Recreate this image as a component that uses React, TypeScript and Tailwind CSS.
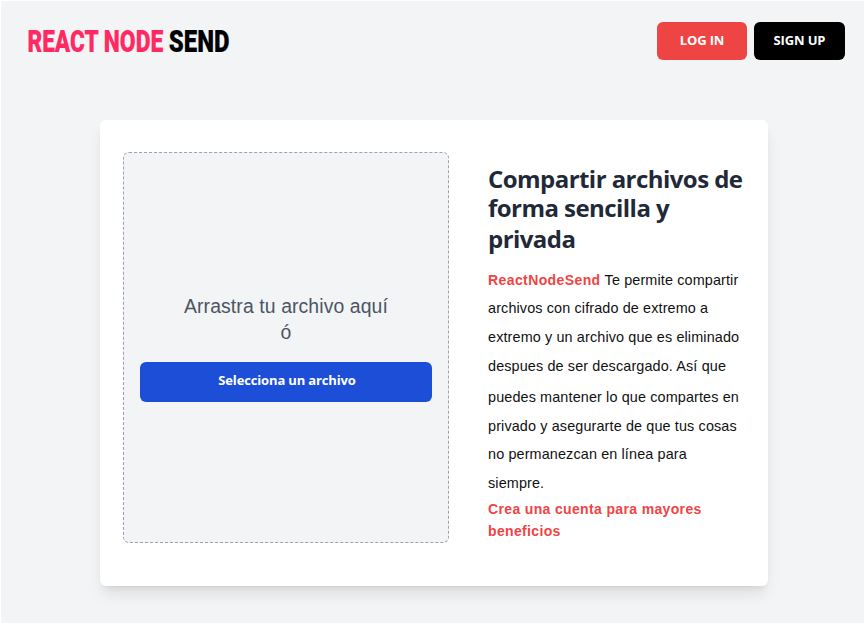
const lines = [
  { text: 'archivos con cifrado de extremo a', height: 'h-[29px]' },
  { text: 'extremo y un archivo que es eliminado', height: 'h-[29px]' },
  { text: 'despues de ser descargado. Así que', height: 'h-[31px]' },
  { text: 'puedes mantener lo que compartes en', height: 'h-[29px]' },
  { text: 'privado y asegurarte de que tus cosas', height: 'h-[28px]' },
  { text: 'no permanezcan en línea para', height: 'h-[29px]' },
  { text: 'siempre.', height: 'h-[29px]' },
];

function Logo() {
  return (
    <svg width="210" height="44" viewBox="0 0 210 44" role="img" aria-label="React Node Send">
      <g fontFamily="Roboto, sans-serif" fontWeight="900" fontSize="32" strokeWidth="0.2">
        <text transform="translate(0.4 33) scale(0.7 1)" textLength="102" lengthAdjust="spacingAndGlyphs" fill="#ff2a62" stroke="#ff2a62">REACT</text>
        <text transform="translate(76.8 33) scale(0.7 1)" textLength="85" lengthAdjust="spacingAndGlyphs" fill="#ff2a62" stroke="#ff2a62">NODE</text>
        <text transform="translate(141.8 33) scale(0.74 1)" textLength="82" lengthAdjust="spacingAndGlyphs" fill="#000" stroke="#000">SEND</text>
      </g>
    </svg>
  );
}

export default function App() {
  return (
    <div className="h-[626px] w-[864px] overflow-hidden bg-white pt-px pb-[3px] pl-px font-['Liberation_Sans',Arial,sans-serif]">
      <div className="h-full overflow-hidden bg-[#f3f4f6]">
        <header className="flex h-[119px] items-start justify-between pt-[18px] pr-[19px] pl-[26px]">
          <Logo />
          <nav className="flex gap-[7px] pt-[3px] font-['Open_Sans',sans-serif] text-[13px] font-bold text-white">
            <a className="flex h-[38px] w-[90px] items-center justify-center rounded-md bg-[#ef4444] pb-px tracking-[-0.15px]">LOG IN</a>
            <a className="flex h-[38px] w-[91px] items-center justify-center rounded-md bg-black pb-px tracking-[-0.15px]">SIGN UP</a>
          </nav>
        </header>
        <main className="ml-[99px] flex h-[466px] w-[668px] rounded-md bg-white pt-8 pl-[23px] shadow-lg">
          <section className="flex h-[391px] w-[326px] shrink-0 flex-col rounded-md border border-dashed border-[#9ca3af] bg-[#f3f4f6] px-4 pt-[140px]">
            <p className="text-center text-[19.4px] leading-[26px] tracking-[0.1px] whitespace-nowrap text-[#4b5563]">Arrastra tu archivo aquí<br />ó</p>
            <button className="mt-[17px] h-10 w-full rounded-md bg-[#1d4ed8] pb-[2px] pl-[2px] font-['Open_Sans',sans-serif] text-[13px] font-bold tracking-[-0.15px] text-white">Selecciona un archivo</button>
          </section>
          <section className="ml-[39px] pt-3 text-[14.4px] whitespace-nowrap text-[#111]">
            <h2 className="h-[102px] font-['Open_Sans','Noto_Sans',sans-serif] text-[24px] font-bold tracking-[-0.55px] text-[#1f2937]">
              <span className="block h-[29px] leading-[30px]">Compartir archivos de</span>
              <span className="block h-[31px] leading-[30px]">forma sencilla y</span>
              <span className="block leading-[30px]">privada</span>
            </h2>
            <div className="leading-[28px] tracking-[0.13px]">
              <p className="flex h-[28px]"><b className="mr-1 text-[14px] tracking-[0.4px] text-[#ef4444]">ReactNodeSend</b><span>Te permite compartir</span></p>
              {lines.map((line) => (
                <p key={line.text} className={line.height}>{line.text}</p>
              ))}
            </div>
            <a className="block text-[14px] leading-[22px] font-bold tracking-[0.35px] text-[#ef4444]">Crea una cuenta para mayores<br />beneficios</a>
          </section>
        </main>
      </div>
    </div>
  );
}
